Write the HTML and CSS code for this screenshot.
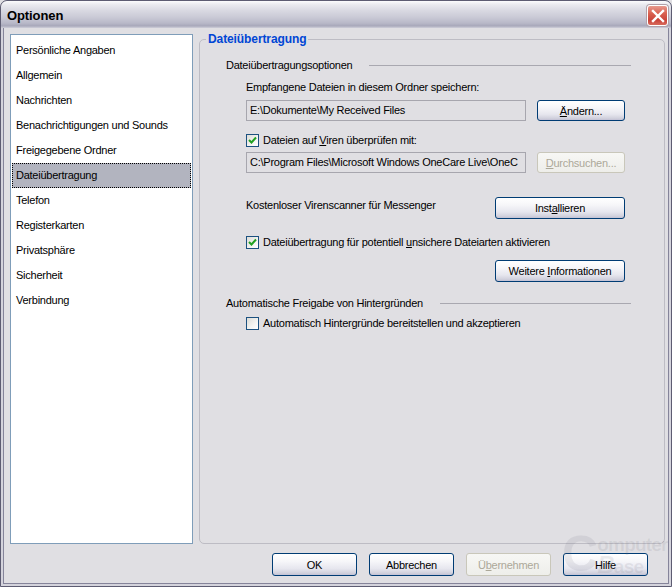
FILE: index.html
```html
<!DOCTYPE html>
<html lang="de">
<head>
<meta charset="utf-8">
<title>Optionen</title>
<link rel="stylesheet" href="styles.css">
</head>
<body>
<div class="window">
  <div class="titlebar">
    <span class="title">Optionen</span>
    <span class="close"><svg width="14" height="14" viewBox="0 0 14 14"><path d="M2 2 L12 12 M12 2 L2 12" stroke="#fff" stroke-width="2.4" stroke-linecap="square"/></svg></span>
  </div>
  <div class="body">
    <div class="main">
      <ul class="list">
        <li>Persönliche Angaben</li>
        <li>Allgemein</li>
        <li>Nachrichten</li>
        <li>Benachrichtigungen und Sounds</li>
        <li>Freigegebene Ordner</li>
        <li class="selected">Dateiübertragung</li>
        <li>Telefon</li>
        <li>Registerkarten</li>
        <li>Privatsphäre</li>
        <li>Sicherheit</li>
        <li>Verbindung</li>
      </ul>
      <div class="group">
        <span class="legend">Dateiübertragung</span>
        <div class="section-head head-1"><span>Dateiübertragungsoptionen</span><i class="rule"></i></div>
        <div class="indent">
          <div class="label label-folder">Empfangene Dateien in diesem Ordner speichern:</div>
          <div class="field-row row-folder">
            <div class="field">E:\Dokumente\My Received Files</div>
            <button class="btn btn-small"><u>Ä</u>ndern...</button>
          </div>
          <div class="check-row row-virus">
            <span class="checkbox checked"><svg width="9" height="9" viewBox="0 0 9 9"><path d="M1 4 L3.5 6.5 L8 1.5" fill="none" stroke="#21a121" stroke-width="2"/></svg></span>
            <span>Dateien auf <u>V</u>iren überprüfen mit:</span>
          </div>
          <div class="field-row row-scanner">
            <div class="field">C:\Program Files\Microsoft Windows OneCare Live\OneC</div>
            <button class="btn btn-small disabled"><u>D</u>urchsuchen...</button>
          </div>
          <div class="action-row row-install">
            <span class="action-text">Kostenloser Virenscanner für Messenger</span>
            <button class="btn btn-wide">Inst<u>a</u>llieren</button>
          </div>
          <div class="check-row row-unsafe">
            <span class="checkbox checked"><svg width="9" height="9" viewBox="0 0 9 9"><path d="M1 4 L3.5 6.5 L8 1.5" fill="none" stroke="#21a121" stroke-width="2"/></svg></span>
            <span>Dateiübertragung für potentiell <u>u</u>nsichere Dateiarten aktivieren</span>
          </div>
          <div class="action-row row-info">
            <button class="btn btn-wide">Weitere <u>I</u>nformationen</button>
          </div>
        </div>
        <div class="section-head head-2"><span>Automatische Freigabe von Hintergründen</span><i class="rule"></i></div>
        <div class="indent">
          <div class="check-row row-bg">
            <span class="checkbox"></span>
            <span>Automatisch Hintergründe bereitstellen und akzeptieren</span>
          </div>
        </div>
      </div>
    </div>
    <div class="footer">
      <button class="btn btn-foot">OK</button>
      <button class="btn btn-foot">Abbrechen</button>
      <button class="btn btn-foot disabled">Ü<u>b</u>ernehmen</button>
      <button class="btn btn-foot">Hilfe</button>
    </div>
  </div>
  <div class="watermark" aria-hidden="true">
    <span class="wm-c">C</span>
    <span class="wm-right">
      <span class="wm-omp">omputer</span>
      <span class="wm-low"><span class="wm-b">B</span><span class="wm-ase">ase</span></span>
    </span>
  </div>
</div>
</body>
</html>
```
FILE: styles.css
```css
* { box-sizing: border-box; }
html, body { margin: 0; padding: 0; }
body {
  background: #e0dfe3;
  font-family: "Liberation Sans", Arial, sans-serif;
  font-size: 11px;
  letter-spacing: -0.25px;
  color: #000;
}
.window {
  position: relative;
  width: 672px;
  height: 587px;
  background: #e0dfe3;
  border: 1px solid #5d5c72;
  border-radius: 7px 7px 0 0;
  box-shadow: inset 0 0 0 2px #d4d3dc, inset 0 0 0 3px #85849a;
  display: flex;
  flex-direction: column;
  overflow: hidden;
}
.titlebar {
  height: 27px;
  flex: none;
  display: flex;
  align-items: center;
  justify-content: space-between;
  padding: 0 3px 0 6px;
  background: linear-gradient(to bottom, #fcfcfd 0%, #ebebf0 12%, #d9d9e2 35%, #cacad6 60%, #b8b8c8 82%, #a8a8ba 92%, #cfcfda 100%);
  border-radius: 6px 6px 0 0;
}
.title {
  font-size: 13px;
  font-weight: bold;
  letter-spacing: -0.1px;
  color: #000;
  padding-top: 1px;
}
.close {
  width: 21px;
  height: 21px;
  margin-top: 2px;
  border-radius: 3px;
  border: 1px solid #fff;
  box-shadow: 0 0 0 1px #b0a0a8;
  background: linear-gradient(to bottom, #e79a8e 0%, #d9604f 40%, #c9443a 75%, #d86a5c 100%);
  display: flex;
  align-items: center;
  justify-content: center;
}
.body {
  flex: 1;
  display: flex;
  flex-direction: column;
  padding: 6px 6px 11px 9px;
}
.main {
  display: flex;
  gap: 6px;
  height: 510px;
}
.list {
  width: 183px;
  height: 510px;
  margin: 0;
  padding: 3px 1px;
  list-style: none;
  background: #fff;
  border: 1px solid #7f9db9;
}
.list li {
  height: 25px;
  line-height: 23px;
  padding-left: 3px;
  border: 1px solid transparent;
}
.list li.selected {
  background: #b2b4bf;
  border: 1px dotted #000;
}
.group {
  position: relative;
  flex: 1;
  margin-top: 5px;
  height: 505px;
  border: 1px solid #bdbcc4;
  border-radius: 5px;
  padding: 0 33px 0 26px;
}
.legend {
  position: absolute;
  top: -8px;
  left: 6px;
  padding: 0 2px;
  background: #e0dfe3;
  color: #0046d5;
  font-weight: bold;
  font-size: 12px;
  letter-spacing: -0.1px;
  line-height: 15px;
}
.section-head {
  display: flex;
  align-items: center;
  height: 14px;
  line-height: 14px;
}
.section-head .rule {
  flex: 1;
  height: 1px;
  background: #a9a8b0;
  margin-left: 17px;
}
.head-1 { margin-top: 18px; }
.head-2 { margin-top: 14px; }
.indent { padding: 0 6px 0 20px; }
.label { height: 14px; line-height: 14px; }
.label-folder { margin-top: 8px; }
.field-row {
  display: flex;
  align-items: flex-start;
  gap: 11px;
}
.row-folder { margin-top: 6px; }
.row-scanner { margin-top: 5px; }
.field {
  width: 280px;
  height: 21px;
  border: 1px solid #a7a6ae;
  background: #e0dfe3;
  line-height: 19px;
  padding-left: 3px;
  white-space: nowrap;
  overflow: hidden;
}
.check-row {
  display: flex;
  align-items: center;
  height: 14px;
  line-height: 14px;
  gap: 4px;
}
.row-virus { margin-top: 12px; }
.row-unsafe { margin-top: 16px; }
.row-bg { margin-top: 6px; }
.checkbox {
  width: 13px;
  height: 13px;
  flex: none;
  border: 1px solid #1c5180;
  background: linear-gradient(135deg, #dcdcd7 0%, #f4f4f2 60%, #ffffff 100%);
  display: flex;
  align-items: center;
  justify-content: center;
}
.action-row {
  display: flex;
  justify-content: space-between;
  align-items: flex-start;
}
.row-install { margin-top: 24px; }
.row-info { margin-top: 11px; justify-content: flex-end; }
.action-text { margin-top: 1px; line-height: 14px; }
.btn {
  font-family: inherit;
  font-size: 11px;
  letter-spacing: -0.25px;
  color: #000;
  padding: 0;
  border: 1px solid #003c74;
  border-radius: 3px;
  background: linear-gradient(to bottom, #ffffff 0%, #f6f6f9 35%, #e6e6ee 70%, #d2d2de 90%, #c3c3d2 100%);
  box-shadow: inset 0 -1px 0 #c6c5d7;
}
.btn u { text-decoration: underline; }
.btn.disabled {
  color: #aca899;
  border-color: #c9c7ba;
  background: linear-gradient(to bottom, #f7f7f5 0%, #eeeeea 100%);
  box-shadow: none;
}
.btn-small { width: 88px; height: 21px; }
.btn-wide { width: 130px; height: 22px; }
.btn-foot { width: 85px; height: 23px; }
.footer {
  display: flex;
  justify-content: flex-end;
  gap: 12px;
  margin-top: 9px;
  padding-right: 17px;
}
.watermark {
  position: absolute;
  left: 561px;
  top: 530px;
  width: 106px;
  display: flex;
  align-items: flex-start;
  white-space: nowrap;
  color: rgba(110, 110, 122, 0.12);
  font-family: "Liberation Sans", Arial, sans-serif;
  font-weight: bold;
  letter-spacing: -0.8px;
  pointer-events: none;
}
.wm-c { flex: none; font-size: 50px; line-height: 46px; }
.wm-right { flex: none; display: flex; flex-direction: column; }
.wm-omp { font-size: 19px; line-height: 19px; margin-top: 4px; }
.wm-low { display: flex; align-items: flex-end; }
.wm-b { font-size: 24px; line-height: 21px; font-style: italic; }
.wm-ase { font-size: 19px; line-height: 17px; }
```
